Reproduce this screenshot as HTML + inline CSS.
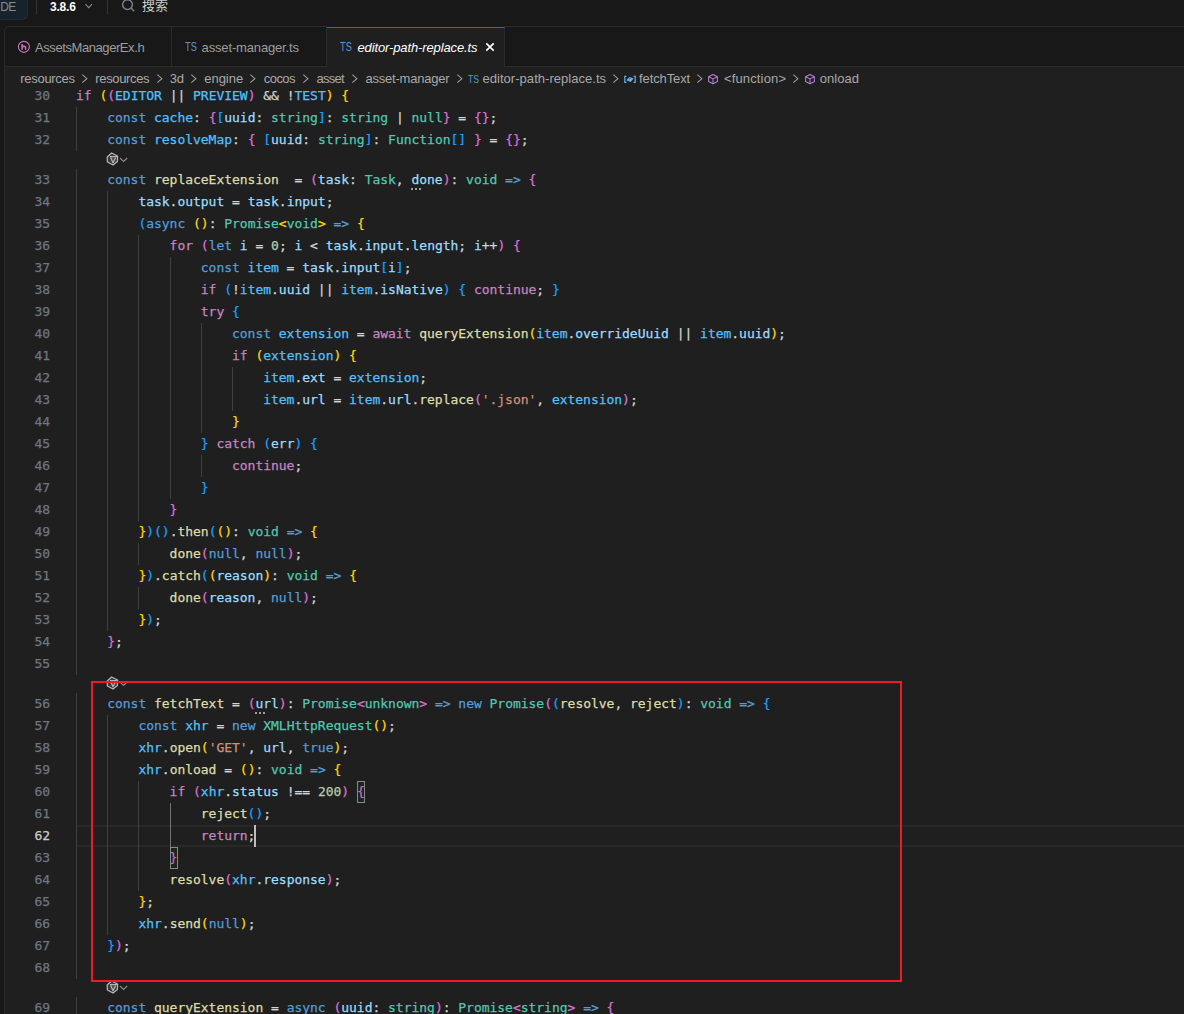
<!DOCTYPE html>
<html lang="zh-CN">
<head>
<meta charset="utf-8">
<title>editor-path-replace.ts</title>
<style>
*{box-sizing:border-box}
html,body{margin:0;padding:0}
body{width:1184px;height:1014px;overflow:hidden;position:relative;background:#181818;color:#ccc;font-family:"Liberation Sans","Noto Sans CJK SC",sans-serif;font-size:13px}
#top{position:absolute;left:0;top:0;width:1184px;height:26px}
#de{position:absolute;left:0;top:0;width:28px;height:20px;background:#17232c;border-bottom-right-radius:6px;border-right:1px solid #1d2d39;border-bottom:1px solid #1d2d39;color:#858c93;font-size:12px;line-height:15px;text-indent:.2px;letter-spacing:-.5px;overflow:hidden}
.sep{position:absolute;top:0;width:1px;height:14px;background:#333}
#ver{position:absolute;left:50px;top:0;font-weight:bold;font-size:12px;line-height:15px;color:#fff;letter-spacing:-0.2px}
#srch{position:absolute;left:142px;top:-3px;font-size:13px;line-height:18px;color:#ccc}
#panel{position:absolute;left:4px;top:26px;width:1190px;height:1000px;border:1px solid #2b2b2b;border-top-left-radius:5px;background:#181818;overflow:hidden}
#tabs{position:absolute;left:0;top:0;width:1190px;height:40px;border-bottom:1px solid #2b2b2b}
.tab{position:absolute;top:0;height:40px;border-right:1px solid #2b2b2b;color:#9d9d9d;font-size:13px;line-height:40px;white-space:nowrap}
.tab.act{background:#1f1f1f;color:#fff;border-top:1px solid #0078d4;height:41px;line-height:38px;font-style:italic}
.tab b{position:absolute;top:0;font-weight:normal;font-style:normal;color:#5a97d6;font-size:12px;transform:scaleX(.77);transform-origin:0 50%}
.tab span{position:absolute;top:1px}
#ed{position:absolute;left:0;top:40px;width:1190px;height:960px;background:#1f1f1f}
#bc{position:absolute;left:0;top:40px;width:1190px;height:22px;background:#1f1f1f;color:#a9a9a9;font-size:13px;line-height:22px;white-space:nowrap;z-index:3}
#bc span,#bc b,#bc svg{position:absolute;top:1px}
#bc b{font-weight:normal;color:#5a97d6;font-size:11px}
#code{position:absolute;left:-5px;top:-67px;width:1200px;height:1100px;font-family:"DejaVu Sans Mono","Liberation Mono",monospace;font-size:13px;letter-spacing:-0.027px;color:#d4d4d4;-webkit-text-stroke:.25px}
.ln{position:absolute;left:20px;width:30px;height:22px;line-height:21px;text-align:right;color:#6e7681}
.ln.cur{color:#ccc}
.cl{position:absolute;left:76px;height:22px;line-height:21px;white-space:pre}
.g{position:absolute;width:1px;height:22px}
.k{color:#569cd6}.c{color:#c586c0}.v{color:#4fc1ff}.p{color:#9cdcfe}.f{color:#dcdcaa}.t{color:#4ec9b0}.s{color:#ce9178}.n{color:#b5cea8}
.Y{color:#ffd700}.P{color:#da70d6}.B{color:#179fff}
.dots{position:absolute;width:10px;height:2px;background:linear-gradient(90deg,#a0a0a0 2px,transparent 2px) 0 0/4px 2px repeat-x}
.bm{position:absolute;width:8px;height:22px;border:1px solid #888;background:rgba(0,100,0,.1)}
#curline{position:absolute;left:77px;top:825px;width:1120px;height:22px;border-top:2px solid #282828;border-bottom:2px solid #282828}
#caret{position:absolute;left:254px;top:825px;width:2px;height:22px;background:#bebebe}
#red{position:absolute;left:91px;top:681px;width:811px;height:301px;border:2px solid #ed1c24;z-index:5}
.lens{position:absolute;left:106px}
</style>
</head>
<body>
<div id="top">
<div id="de">DE</div>
<i class="sep" style="left:36px"></i>
<div id="ver">3.8.6</div>
<svg style="position:absolute;left:84px;top:3px" width="10" height="6" viewBox="0 0 10 6"><path d="M1.4 1.2 L4.7 4.6 L8 1.2" fill="none" stroke="#8a8a8a" stroke-width="1.1"/></svg>
<i class="sep" style="left:107px"></i>
<svg style="position:absolute;left:121px;top:-2px" width="15" height="15" viewBox="0 0 15 15"><circle cx="6.5" cy="6.6" r="4.9" fill="none" stroke="#7b8190" stroke-width="1.4"/><path d="M10 10.1 L13.2 13.3" stroke="#7b8190" stroke-width="1.4"/></svg>
<div id="srch">搜索</div>
</div>
<i style="position:absolute;left:327px;top:26px;width:177px;height:1px;background:#181818;z-index:9"></i>
<div id="panel">
<div id="tabs">
<div class="tab" style="left:0;width:167px"><svg style="position:absolute;left:12px;top:13px" width="14" height="14" viewBox="0 0 14 14"><circle cx="6.9" cy="6.8" r="5.5" fill="none" stroke="#c57bb4" stroke-width="1.15"/><path d="M5.1 3.9 V9.7 M5.1 7.3 Q6.6 5.7 8.2 6.7 Q8.6 7 8.6 7.8 V9.7" fill="none" stroke="#c57bb4" stroke-width="1.5"/></svg><span style="left:30px;letter-spacing:-.42px">AssetsManagerEx.h</span></div>
<div class="tab" style="left:167px;width:155px"><b style="left:13.3px">TS</b><span style="left:29.6px;letter-spacing:-.155px">asset-manager.ts</span></div>
<div class="tab act" style="left:322px;width:178px"><b style="left:13.3px">TS</b><span style="left:30.5px;letter-spacing:-.124px">editor-path-replace.ts</span><svg style="position:absolute;left:158px;top:14px" width="10" height="10" viewBox="0 0 10 10"><path d="M1.3 1.3 L8.7 8.7 M8.7 1.3 L1.3 8.7" stroke="#fff" stroke-width="1.7"/></svg></div>
</div>
<div id="ed">
<div id="code">
<div id="curline"></div>
<i class="g" style="left:76px;top:107px;height:44px;background:#404040"></i><i class="g" style="left:76px;top:169px;height:506px;background:#404040"></i><i class="g" style="left:76px;top:693px;height:286px;background:#404040"></i><i class="g" style="left:76px;top:997px;height:22px;background:#404040"></i><i class="g" style="left:107px;top:191px;height:440px;background:#404040"></i><i class="g" style="left:107px;top:715px;height:220px;background:#404040"></i><i class="g" style="left:138px;top:235px;height:286px;background:#404040"></i><i class="g" style="left:138px;top:543px;height:22px;background:#404040"></i><i class="g" style="left:138px;top:587px;height:22px;background:#404040"></i><i class="g" style="left:138px;top:781px;height:110px;background:#404040"></i><i class="g" style="left:170px;top:257px;height:242px;background:#404040"></i><i class="g" style="left:170px;top:803px;height:44px;background:#707070"></i><i class="g" style="left:201px;top:323px;height:110px;background:#404040"></i><i class="g" style="left:201px;top:455px;height:22px;background:#404040"></i><i class="g" style="left:232px;top:367px;height:44px;background:#404040"></i>
<div class="ln" style="top:85px">30</div>
<div class="cl" style="top:85px"><span class="c">if</span> <span class="Y">(</span><span class="P">(</span><span class="v">EDITOR</span> || <span class="v">PREVIEW</span><span class="P">)</span> &amp;&amp; !<span class="v">TEST</span><span class="Y">)</span> <span class="Y">{</span></div>
<div class="ln" style="top:107px">31</div>
<div class="cl" style="top:107px">    <span class="k">const</span> <span class="v">cache</span>: <span class="P">{</span><span class="B">[</span><span class="p">uuid</span>: <span class="t">string</span><span class="B">]</span>: <span class="t">string</span> | <span class="t">null</span><span class="P">}</span> = <span class="P">{}</span>;</div>
<div class="ln" style="top:129px">32</div>
<div class="cl" style="top:129px">    <span class="k">const</span> <span class="v">resolveMap</span>: <span class="P">{</span> <span class="B">[</span><span class="p">uuid</span>: <span class="t">string</span><span class="B">]</span>: <span class="t">Function</span><span class="B">[]</span> <span class="P">}</span> = <span class="P">{}</span>;</div>
<div class="ln" style="top:169px">33</div>
<div class="cl" style="top:169px">    <span class="k">const</span> <span class="f">replaceExtension</span>  = <span class="P">(</span><span class="p">task</span>: <span class="t">Task</span>, <span class="p u">done</span><span class="P">)</span>: <span class="t">void</span> <span class="k">=&gt;</span> <span class="P">{</span></div>
<div class="ln" style="top:191px">34</div>
<div class="cl" style="top:191px">        <span class="p">task</span>.<span class="p">output</span> = <span class="p">task</span>.<span class="p">input</span>;</div>
<div class="ln" style="top:213px">35</div>
<div class="cl" style="top:213px">        <span class="B">(</span><span class="k">async</span> <span class="Y">()</span>: <span class="t">Promise</span><span class="Y">&lt;</span><span class="t">void</span><span class="Y">&gt;</span> <span class="k">=&gt;</span> <span class="Y">{</span></div>
<div class="ln" style="top:235px">36</div>
<div class="cl" style="top:235px">            <span class="c">for</span> <span class="P">(</span><span class="k">let</span> <span class="p">i</span> = <span class="n">0</span>; <span class="p">i</span> &lt; <span class="p">task</span>.<span class="p">input</span>.<span class="p">length</span>; <span class="p">i</span>++<span class="P">)</span> <span class="P">{</span></div>
<div class="ln" style="top:257px">37</div>
<div class="cl" style="top:257px">                <span class="k">const</span> <span class="v">item</span> = <span class="p">task</span>.<span class="p">input</span><span class="B">[</span><span class="p">i</span><span class="B">]</span>;</div>
<div class="ln" style="top:279px">38</div>
<div class="cl" style="top:279px">                <span class="c">if</span> <span class="B">(</span>!<span class="v">item</span>.<span class="p">uuid</span> || <span class="v">item</span>.<span class="p">isNative</span><span class="B">)</span> <span class="B">{</span> <span class="c">continue</span>; <span class="B">}</span></div>
<div class="ln" style="top:301px">39</div>
<div class="cl" style="top:301px">                <span class="c">try</span> <span class="B">{</span></div>
<div class="ln" style="top:323px">40</div>
<div class="cl" style="top:323px">                    <span class="k">const</span> <span class="v">extension</span> = <span class="c">await</span> <span class="f">queryExtension</span><span class="Y">(</span><span class="v">item</span>.<span class="p">overrideUuid</span> || <span class="v">item</span>.<span class="p">uuid</span><span class="Y">)</span>;</div>
<div class="ln" style="top:345px">41</div>
<div class="cl" style="top:345px">                    <span class="c">if</span> <span class="Y">(</span><span class="v">extension</span><span class="Y">)</span> <span class="Y">{</span></div>
<div class="ln" style="top:367px">42</div>
<div class="cl" style="top:367px">                        <span class="v">item</span>.<span class="p">ext</span> = <span class="v">extension</span>;</div>
<div class="ln" style="top:389px">43</div>
<div class="cl" style="top:389px">                        <span class="v">item</span>.<span class="p">url</span> = <span class="v">item</span>.<span class="p">url</span>.<span class="f">replace</span><span class="P">(</span><span class="s">'.json'</span>, <span class="v">extension</span><span class="P">)</span>;</div>
<div class="ln" style="top:411px">44</div>
<div class="cl" style="top:411px">                    <span class="Y">}</span></div>
<div class="ln" style="top:433px">45</div>
<div class="cl" style="top:433px">                <span class="B">}</span> <span class="c">catch</span> <span class="B">(</span><span class="p">err</span><span class="B">)</span> <span class="B">{</span></div>
<div class="ln" style="top:455px">46</div>
<div class="cl" style="top:455px">                    <span class="c">continue</span>;</div>
<div class="ln" style="top:477px">47</div>
<div class="cl" style="top:477px">                <span class="B">}</span></div>
<div class="ln" style="top:499px">48</div>
<div class="cl" style="top:499px">            <span class="P">}</span></div>
<div class="ln" style="top:521px">49</div>
<div class="cl" style="top:521px">        <span class="Y">}</span><span class="B">)()</span>.<span class="f">then</span><span class="B">(</span><span class="Y">()</span>: <span class="t">void</span> <span class="k">=&gt;</span> <span class="Y">{</span></div>
<div class="ln" style="top:543px">50</div>
<div class="cl" style="top:543px">            <span class="f">done</span><span class="P">(</span><span class="k">null</span>, <span class="k">null</span><span class="P">)</span>;</div>
<div class="ln" style="top:565px">51</div>
<div class="cl" style="top:565px">        <span class="Y">}</span><span class="B">)</span>.<span class="f">catch</span><span class="B">(</span><span class="Y">(</span><span class="p">reason</span><span class="Y">)</span>: <span class="t">void</span> <span class="k">=&gt;</span> <span class="Y">{</span></div>
<div class="ln" style="top:587px">52</div>
<div class="cl" style="top:587px">            <span class="f">done</span><span class="P">(</span><span class="p">reason</span>, <span class="k">null</span><span class="P">)</span>;</div>
<div class="ln" style="top:609px">53</div>
<div class="cl" style="top:609px">        <span class="Y">}</span><span class="B">)</span>;</div>
<div class="ln" style="top:631px">54</div>
<div class="cl" style="top:631px">    <span class="P">}</span>;</div>
<div class="ln" style="top:653px">55</div>
<div class="cl" style="top:653px"></div>
<div class="ln" style="top:693px">56</div>
<div class="cl" style="top:693px">    <span class="k">const</span> <span class="f">fetchText</span> = <span class="P">(</span><span class="p u">url</span><span class="P">)</span>: <span class="t">Promise</span><span class="P">&lt;</span><span class="t">unknown</span><span class="P">&gt;</span> <span class="k">=&gt;</span> <span class="k">new</span> <span class="t">Promise</span><span class="P">(</span><span class="B">(</span><span class="f">resolve</span>, <span class="f">reject</span><span class="B">)</span>: <span class="t">void</span> <span class="k">=&gt;</span> <span class="B">{</span></div>
<div class="ln" style="top:715px">57</div>
<div class="cl" style="top:715px">        <span class="k">const</span> <span class="v">xhr</span> = <span class="k">new</span> <span class="t">XMLHttpRequest</span><span class="Y">()</span>;</div>
<div class="ln" style="top:737px">58</div>
<div class="cl" style="top:737px">        <span class="v">xhr</span>.<span class="f">open</span><span class="Y">(</span><span class="s">'GET'</span>, <span class="p">url</span>, <span class="k">true</span><span class="Y">)</span>;</div>
<div class="ln" style="top:759px">59</div>
<div class="cl" style="top:759px">        <span class="v">xhr</span>.<span class="f">onload</span> = <span class="Y">()</span>: <span class="t">void</span> <span class="k">=&gt;</span> <span class="Y">{</span></div>
<div class="ln" style="top:781px">60</div>
<div class="cl" style="top:781px">            <span class="c">if</span> <span class="P">(</span><span class="v">xhr</span>.<span class="p">status</span> !== <span class="n">200</span><span class="P">)</span> <span class="P m">{</span></div>
<div class="ln" style="top:803px">61</div>
<div class="cl" style="top:803px">                <span class="f">reject</span><span class="B">()</span>;</div>
<div class="ln cur" style="top:825px">62</div>
<div class="cl" style="top:825px">                <span class="c">return</span>;</div>
<div class="ln" style="top:847px">63</div>
<div class="cl" style="top:847px">            <span class="P m">}</span></div>
<div class="ln" style="top:869px">64</div>
<div class="cl" style="top:869px">            <span class="f">resolve</span><span class="P">(</span><span class="v">xhr</span>.<span class="p">response</span><span class="P">)</span>;</div>
<div class="ln" style="top:891px">65</div>
<div class="cl" style="top:891px">        <span class="Y">}</span>;</div>
<div class="ln" style="top:913px">66</div>
<div class="cl" style="top:913px">        <span class="v">xhr</span>.<span class="f">send</span><span class="Y">(</span><span class="k">null</span><span class="Y">)</span>;</div>
<div class="ln" style="top:935px">67</div>
<div class="cl" style="top:935px">    <span class="B">}</span><span class="P">)</span>;</div>
<div class="ln" style="top:957px">68</div>
<div class="cl" style="top:957px"></div>
<div class="ln" style="top:997px">69</div>
<div class="cl" style="top:997px">    <span class="k">const</span> <span class="f">queryExtension</span> = <span class="k">async</span> <span class="P">(</span><span class="p">uuid</span>: <span class="t">string</span><span class="P">)</span>: <span class="t">Promise</span><span class="P">&lt;</span><span class="t">string</span><span class="P">&gt;</span> <span class="k">=&gt;</span> <span class="P">{</span></div>
<svg class="lens" style="top:152px" width="24" height="14" viewBox="0 0 24 14"><g fill="rgba(178,178,178,.18)" stroke="#b6b6b6" stroke-width="1.25" stroke-linejoin="round"><path d="M5.6 1 L11.6 4 L11.4 9.4 L7 13 L1.4 10 L1.2 5 Z"/><path d="M4 4.6 L11 4.6 M4.6 5.6 L7 10.8 L9.6 5.8"/></g><path d="M14 6 L17.6 9.4 L21.2 6" fill="none" stroke="#8c8c8c" stroke-width="1.1"/></svg><svg class="lens" style="top:676px" width="24" height="14" viewBox="0 0 24 14"><g fill="rgba(178,178,178,.18)" stroke="#b6b6b6" stroke-width="1.25" stroke-linejoin="round"><path d="M5.6 1 L11.6 4 L11.4 9.4 L7 13 L1.4 10 L1.2 5 Z"/><path d="M4 4.6 L11 4.6 M4.6 5.6 L7 10.8 L9.6 5.8"/></g><path d="M14 6 L17.6 9.4 L21.2 6" fill="none" stroke="#8c8c8c" stroke-width="1.1"/></svg><svg class="lens" style="top:980px" width="24" height="14" viewBox="0 0 24 14"><g fill="rgba(178,178,178,.18)" stroke="#b6b6b6" stroke-width="1.25" stroke-linejoin="round"><path d="M5.6 1 L11.6 4 L11.4 9.4 L7 13 L1.4 10 L1.2 5 Z"/><path d="M4 4.6 L11 4.6 M4.6 5.6 L7 10.8 L9.6 5.8"/></g><path d="M14 6 L17.6 9.4 L21.2 6" fill="none" stroke="#8c8c8c" stroke-width="1.1"/></svg>
<i class="dots" style="left:411px;top:188px"></i><i class="dots" style="left:255px;top:712px"></i>
<i class="bm" style="left:357px;top:781px"></i><i class="bm" style="left:170px;top:847px"></i>
<div id="caret"></div>
<div id="red"></div>
</div>
</div>
<div id="bc">
<span style="left:15.3px;letter-spacing:-0.297px">resources</span>
<span style="left:90.3px;letter-spacing:-0.360px">resources</span>
<span style="left:164.8px;letter-spacing:-0.369px">3d</span>
<span style="left:199.2px;letter-spacing:-0.009px">engine</span>
<span style="left:258.8px;letter-spacing:-0.567px">cocos</span>
<span style="left:311.6px;letter-spacing:-0.745px">asset</span>
<span style="left:360.5px;letter-spacing:-0.218px">asset-manager</span>
<span style="left:477.5px;letter-spacing:0.036px">editor-path-replace.ts</span>
<span style="left:634.0px;letter-spacing:-0.104px">fetchText</span>
<span style="left:718.9px;letter-spacing:0.153px">&lt;function&gt;</span>
<span style="left:814.7px;letter-spacing:0.051px">onload</span>
<svg style="left:76.0px;top:6px" width="8" height="11" viewBox="0 0 8 11"><path d="M1.3 1.7 L5.9 5.7 L1.3 9.7" fill="none" stroke="#9a9a9a" stroke-width="1.1"/></svg>
<svg style="left:150.7px;top:6px" width="8" height="11" viewBox="0 0 8 11"><path d="M1.3 1.7 L5.9 5.7 L1.3 9.7" fill="none" stroke="#9a9a9a" stroke-width="1.1"/></svg>
<svg style="left:184.9px;top:6px" width="8" height="11" viewBox="0 0 8 11"><path d="M1.3 1.7 L5.9 5.7 L1.3 9.7" fill="none" stroke="#9a9a9a" stroke-width="1.1"/></svg>
<svg style="left:244.4px;top:6px" width="8" height="11" viewBox="0 0 8 11"><path d="M1.3 1.7 L5.9 5.7 L1.3 9.7" fill="none" stroke="#9a9a9a" stroke-width="1.1"/></svg>
<svg style="left:296.6px;top:6px" width="8" height="11" viewBox="0 0 8 11"><path d="M1.3 1.7 L5.9 5.7 L1.3 9.7" fill="none" stroke="#9a9a9a" stroke-width="1.1"/></svg>
<svg style="left:345.7px;top:6px" width="8" height="11" viewBox="0 0 8 11"><path d="M1.3 1.7 L5.9 5.7 L1.3 9.7" fill="none" stroke="#9a9a9a" stroke-width="1.1"/></svg>
<svg style="left:450.9px;top:6px" width="8" height="11" viewBox="0 0 8 11"><path d="M1.3 1.7 L5.9 5.7 L1.3 9.7" fill="none" stroke="#9a9a9a" stroke-width="1.1"/></svg>
<svg style="left:607.4px;top:6px" width="8" height="11" viewBox="0 0 8 11"><path d="M1.3 1.7 L5.9 5.7 L1.3 9.7" fill="none" stroke="#9a9a9a" stroke-width="1.1"/></svg>
<svg style="left:691.4px;top:6px" width="8" height="11" viewBox="0 0 8 11"><path d="M1.3 1.7 L5.9 5.7 L1.3 9.7" fill="none" stroke="#9a9a9a" stroke-width="1.1"/></svg>
<svg style="left:787.2px;top:6px" width="8" height="11" viewBox="0 0 8 11"><path d="M1.3 1.7 L5.9 5.7 L1.3 9.7" fill="none" stroke="#9a9a9a" stroke-width="1.1"/></svg>
<b style="left:463.1px;transform:scaleX(.78);transform-origin:0 50%">TS</b>
<svg style="left:619.0px;top:8px" width="12" height="9" viewBox="0 0 12 9"><g fill="none" stroke="#6cb0ee" stroke-width="1.15"><path d="M2.4 1.3 H0.8 V7.4 H2.4 M9.6 1.3 H11.2 V7.4 H9.6"/><path d="M3.3 5 L5.6 2.6 L8.7 3.7 L6.4 6.2 Z M3.3 5 L6.2 4.5 L8.7 3.7 M6.2 4.5 L6.4 6.2"/></g></svg>
<svg style="left:702.0px;top:6px" width="12" height="12" viewBox="0 0 12 12"><g fill="none" stroke="#b180d7" stroke-width="1.05" stroke-linejoin="round"><path d="M6 1.5 L10.4 3.7 V8.5 L6 10.7 L1.6 8.5 V3.7 Z"/><path d="M1.6 3.7 L6 5.9 L10.4 3.7 M6 5.9 V10.7"/></g></svg>
<svg style="left:799.0px;top:6px" width="12" height="12" viewBox="0 0 12 12"><g fill="none" stroke="#b180d7" stroke-width="1.05" stroke-linejoin="round"><path d="M6 1.5 L10.4 3.7 V8.5 L6 10.7 L1.6 8.5 V3.7 Z"/><path d="M1.6 3.7 L6 5.9 L10.4 3.7 M6 5.9 V10.7"/></g></svg>
</div>
</div>
</body>
</html>
